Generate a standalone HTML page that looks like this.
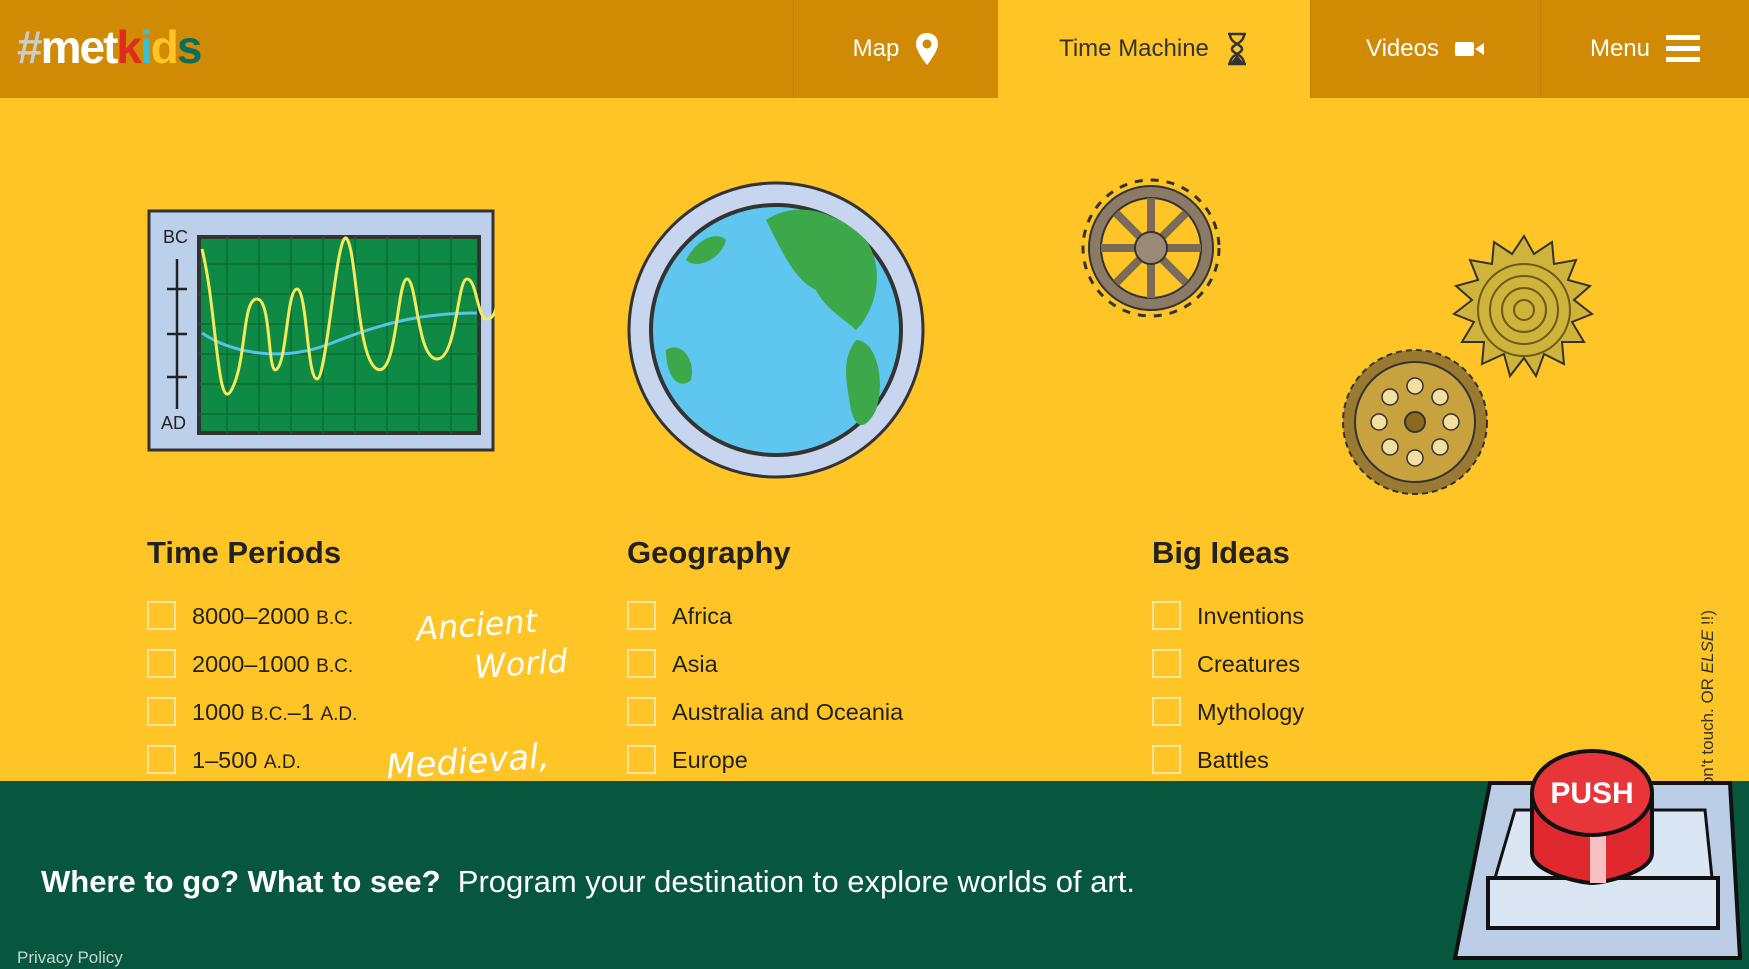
<!DOCTYPE html>
<html><head><meta charset="utf-8"><style>
*{margin:0;padding:0;box-sizing:border-box}
body{width:1749px;height:969px;overflow:hidden;background:#ffc425;font-family:"Liberation Sans",sans-serif;position:relative;color:#222}
.hdr{position:absolute;left:0;top:0;width:1749px;height:98px;background:#d08a03}
.logo{position:absolute;left:17px;top:20px;font-size:46px;font-weight:bold;letter-spacing:-2px;color:#fff}
.nav{position:absolute;top:0;height:98px;display:flex;align-items:center;justify-content:center;font-size:24px;color:#fff;border-left:1px solid #c07f02}
.nav svg{margin-left:16px}
.h{position:absolute;top:535px;font-size:31px;font-weight:bold}
.row{position:absolute;font-size:23.5px;height:30px;line-height:30px}
.row i{position:absolute;left:0;top:0;width:29px;height:29px;border:2px solid #fde3a0}
.row span{position:absolute;left:45px;white-space:nowrap}
small{font-size:19px}
.ftr{position:absolute;left:0;top:781px;width:1749px;height:188px;background:#07573f}
.hand{position:absolute;color:#fff;font-family:"DejaVu Sans",sans-serif;font-style:italic;transform:rotate(-4deg)}
</style></head><body>
<div class="hdr">
<div class="logo"><span style="color:#ccc">#</span>met<span style="color:#e02a20">k</span><span style="color:#3bbfd4">i</span><span style="color:#ffc425">d</span><span style="color:#0a6e5d">s</span></div>
<div class="nav" style="left:793px;width:205px">Map<svg width="24" height="34" viewBox="0 0 24 34"><path d="M12 1C5 1 1 6 1 12c0 8 11 21 11 21s11-13 11-21C23 6 19 1 12 1z" fill="#fff"/><circle cx="12" cy="12" r="4.5" fill="#d08a03"/></svg></div>
<div class="nav" style="left:998px;width:312px;background:#ffc425;color:#333;border:none">Time Machine<svg width="24" height="34" viewBox="0 0 24 34" fill="none" stroke="#333" stroke-width="2.5"><path d="M3 2h18M3 32h18M5 2c0 10 12 10 12 15S5 22 5 32M19 2c0 10-12 10-12 15s12 5 12 15"/><path d="M8 30l4-5 4 5z" fill="#333"/></svg></div>
<div class="nav" style="left:1310px;width:230px">Videos<svg width="30" height="18" viewBox="0 0 30 18"><rect x="0" y="2" width="19" height="14" rx="2" fill="#fff"/><path d="M20 9l9-6v12z" fill="#fff"/></svg></div>
<div class="nav" style="left:1540px;width:209px">Menu<svg width="34" height="28" viewBox="0 0 34 28"><rect y="0" width="34" height="5" fill="#fff"/><rect y="11" width="34" height="5" fill="#fff"/><rect y="22" width="34" height="5" fill="#fff"/></svg></div>
</div>

<svg style="position:absolute;left:147px;top:209px" width="348" height="243" viewBox="0 0 348 243">
<rect x="2" y="2" width="344" height="239" fill="#bcd0ec" stroke="#333" stroke-width="3"/>
<rect x="52" y="28" width="280" height="196" fill="#0e8a45" stroke="#333" stroke-width="4"/>
<g stroke="#0a6a35" stroke-width="1.5"><path d="M52 55h280M52 85h280M52 115h280M52 145h280M52 175h280M52 205h280M80 28v196M112 28v196M144 28v196M176 28v196M208 28v196M240 28v196M272 28v196M304 28v196"/></g>
<path d="M55 124c30 20 80 30 130 10s90-30 145-30" stroke="#5bc2e6" stroke-width="3" fill="none"/>
<path d="M55 40c15 60 15 170 30 140s10-90 25-90 10 80 20 70 10-80 20-80 10 90 20 90 20-155 30-140 10 120 30 130 20-90 30-90 10 80 30 80 20-80 30-80 10 40 20 40 10-20 10-20" stroke="#f3ea5c" stroke-width="3" fill="none"/>
<text x="16" y="34" font-size="18" fill="#222" font-family="Liberation Sans">BC</text>
<text x="14" y="220" font-size="18" fill="#222" font-family="Liberation Sans">AD</text>
<path d="M30 50v150M20 80h20M20 125h20M20 168h20" stroke="#222" stroke-width="2.5"/>
</svg>

<svg style="position:absolute;left:626px;top:180px" width="300" height="300" viewBox="0 0 300 300">
<circle cx="150" cy="150" r="147" fill="#c7d6ee" stroke="#333" stroke-width="3"/>
<circle cx="150" cy="150" r="125" fill="#5ec6ef" stroke="#333" stroke-width="4"/>
<path d="M140 40c30-20 70-10 100 20 20 30 10 70-10 90-10-10-30-20-40-40-20-10-30-30-50-70z" fill="#3da84a"/>
<path d="M230 160c20 0 30 40 20 70-10 20-20 20-25 0-5-30-10-50 5-70z" fill="#3da84a"/>
<path d="M40 170c15-10 30 10 25 30-10 10-25 0-25-30z" fill="#3da84a"/>
<path d="M60 80c10-20 30-30 40-20-5 20-30 30-40 20z" fill="#3da84a"/>
</svg>

<svg style="position:absolute;left:1076px;top:173px" width="150" height="150" viewBox="0 0 150 150">
<circle cx="75" cy="75" r="62" fill="#8a7a66" stroke="#333" stroke-width="2"/>
<circle cx="75" cy="75" r="50" fill="#ffc425" stroke="#333" stroke-width="2"/>
<g stroke="#7a6a58" stroke-width="8"><path d="M75 25v100M25 75h100M40 40l70 70M110 40l-70 70"/></g>
<circle cx="75" cy="75" r="16" fill="#9a8a76" stroke="#333" stroke-width="2"/>
<g stroke="#333" stroke-width="3" stroke-dasharray="8 8" fill="none"><circle cx="75" cy="75" r="68"/></g>
</svg>
<svg style="position:absolute;left:1448px;top:234px" width="152" height="152" viewBox="0 0 152 152">
<polygon points="76,2 86,20 104,8 106,30 128,26 120,46 142,52 126,66 144,80 124,88 136,108 114,108 116,130 96,120 88,142 76,124 62,142 56,120 34,130 36,108 14,108 26,88 6,80 24,66 8,52 30,46 22,26 44,30 46,8 64,20" fill="#cfb33a" stroke="#333" stroke-width="2"/>
<g fill="none" stroke="#6d5a1a" stroke-width="2"><circle cx="76" cy="76" r="10"/><circle cx="76" cy="76" r="22"/><circle cx="76" cy="76" r="34"/><circle cx="76" cy="76" r="46"/></g>
</svg>
<svg style="position:absolute;left:1339px;top:346px" width="152" height="152" viewBox="0 0 152 152">
<circle cx="76" cy="76" r="72" fill="#9a7a30" stroke="#333" stroke-width="2" stroke-dasharray="6 4"/>
<circle cx="76" cy="76" r="60" fill="#c9a240" stroke="#333" stroke-width="2"/>
<g fill="#f4dfa0" stroke="#333" stroke-width="1.5"><circle cx="76" cy="40" r="8"/><circle cx="76" cy="112" r="8"/><circle cx="40" cy="76" r="8"/><circle cx="112" cy="76" r="8"/><circle cx="51" cy="51" r="8"/><circle cx="101" cy="101" r="8"/><circle cx="101" cy="51" r="8"/><circle cx="51" cy="101" r="8"/></g>
<circle cx="76" cy="76" r="10" fill="#8a6a20" stroke="#333" stroke-width="2"/>
</svg>

<div class="h" style="left:147px">Time Periods</div>
<div class="h" style="left:627px">Geography</div>
<div class="h" style="left:1152px">Big Ideas</div>

<div class="row" style="left:147px;top:601px"><i></i><span>8000–2000 <small>B.C.</small></span></div>
<div class="row" style="left:147px;top:649px"><i></i><span>2000–1000 <small>B.C.</small></span></div>
<div class="row" style="left:147px;top:697px"><i></i><span>1000 <small>B.C.</small>–1 <small>A.D.</small></span></div>
<div class="row" style="left:147px;top:745px"><i></i><span>1–500 <small>A.D.</small></span></div>
<div class="row" style="left:627px;top:601px"><i></i><span>Africa</span></div>
<div class="row" style="left:627px;top:649px"><i></i><span>Asia</span></div>
<div class="row" style="left:627px;top:697px"><i></i><span>Australia and Oceania</span></div>
<div class="row" style="left:627px;top:745px"><i></i><span>Europe</span></div>
<div class="row" style="left:1152px;top:601px"><i></i><span>Inventions</span></div>
<div class="row" style="left:1152px;top:649px"><i></i><span>Creatures</span></div>
<div class="row" style="left:1152px;top:697px"><i></i><span>Mythology</span></div>
<div class="row" style="left:1152px;top:745px"><i></i><span>Battles</span></div>

<div class="hand" style="left:416px;top:606px;font-size:32px">Ancient</div>
<div class="hand" style="left:474px;top:645px;font-size:32px">World</div>
<div class="hand" style="left:386px;top:742px;font-size:34px">Medieval,</div>

<div style="position:absolute;left:1690px;top:600px;width:30px;height:181px;overflow:hidden">
<div style="position:absolute;left:8px;top:10px;transform-origin:0 0;transform:rotate(-90deg) translateX(-100%);white-space:nowrap;font-size:17px;line-height:20px;color:#333">(Don't touch. OR <i>ELSE</i> !!)</div>
</div>

<div class="ftr">
<div style="position:absolute;left:41px;top:83px;font-size:31px;color:#fff;white-space:nowrap"><b>Where to go? What to see?</b>&nbsp; Program your destination to explore worlds of art.</div>
<div style="position:absolute;left:17px;top:167px;font-size:17px;color:#c8d4cf">Privacy Policy</div>
</div>

<svg style="position:absolute;left:1450px;top:748px" width="295" height="218" viewBox="0 0 295 218">
<polygon points="5,210 40,35 280,35 290,210" fill="#bccde6" stroke="#111" stroke-width="4"/>
<polygon points="45,130 65,62 255,62 262,130" fill="#dbe6f5" stroke="#111" stroke-width="3"/>
<rect x="38" y="130" width="230" height="50" fill="#dbe6f5" stroke="#111" stroke-width="4"/>
<path d="M82 45v60c0 20 50 30 60 30s60-10 60-30V45" fill="#e0282f" stroke="#111" stroke-width="4"/>
<rect x="140" y="60" width="16" height="75" fill="#f7c0c0"/>
<ellipse cx="142" cy="45" rx="60" ry="42" fill="#e8353a" stroke="#111" stroke-width="4"/>
<text x="142" y="55" text-anchor="middle" font-size="30" font-weight="bold" fill="#fff" font-family="Liberation Sans">PUSH</text>
</svg>
</body></html>
